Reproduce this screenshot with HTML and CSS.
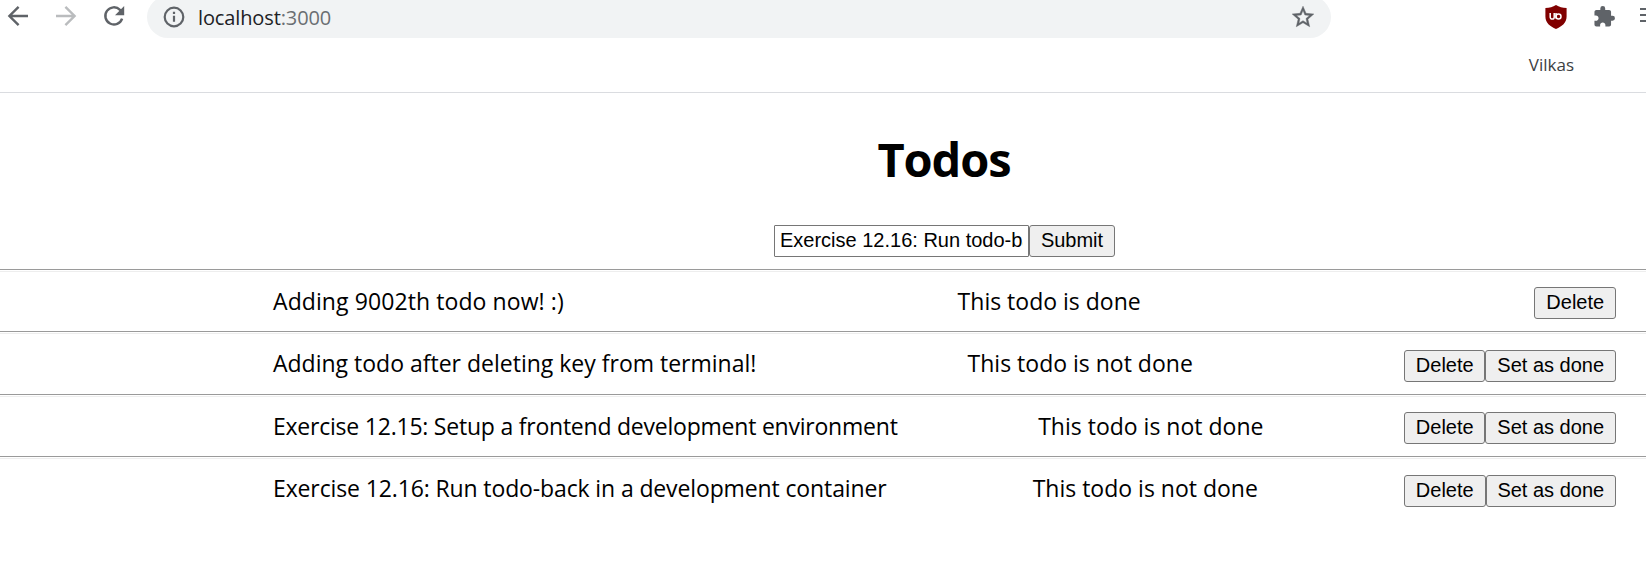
FILE: index.html
```
<!DOCTYPE html>
<html lang="en">
<head>
<meta charset="utf-8">
<title>Todos</title>
<link rel="stylesheet" href="styles.css">
</head>
<body>
<header class="browser">
  <div class="toolbar">
    <svg class="icon back" viewBox="0 0 24 24" fill="none" stroke="#5f6368" stroke-width="2.4"><path d="M22 12H3.5M12.6 2.8 3.4 12l9.2 9.2"/></svg>
    <svg class="icon forward" viewBox="0 0 24 24" fill="none" stroke="#babcbe" stroke-width="2.4"><path d="M2 12h18.5M11.4 2.8l9.2 9.2-9.2 9.2"/></svg>
    <svg class="icon reload" viewBox="0 0 24 24"><path fill="none" stroke="#5f6368" stroke-width="2.4" d="M20.1 14.6A8.6 8.6 0 1 1 18 5.800l1.600 1.600"/><path fill="#5f6368" d="M22.200 2v9.200H13z"/></svg>
    <div class="omnibox">
      <svg class="info" viewBox="0 0 22 22"><circle cx="11" cy="11" r="9.300" fill="none" stroke="#5f6368" stroke-width="2.200"/><path fill="#5f6368" d="M9.900 5.800h2.200V8H9.900zM9.900 9.700h2.200v6.100H9.900z"/></svg>
      <span class="url">localhost<span class="port">:3000</span></span>
      <svg class="star" viewBox="0 0 24 24"><path fill="#5f6368" stroke="#5f6368" stroke-width=".4" d="M22 9.240l-7.190-.62L12 2 9.190 8.630 2 9.240l5.460 4.730L5.820 21 12 17.270 18.180 21l-1.630-7.030L22 9.240zM12 15.400l-3.760 2.270 1-4.280-3.320-2.880 4.380-.38L12 6.100l1.710 4.040 4.380.38-3.320 2.880 1 4.280L12 15.400z"/></svg>
    </div>
    <svg class="shield" viewBox="0 0 22 24"><path fill="#800000" d="M11 0c3.200 2 6.400 3 10.600 3v8.500C21.600 18 17 21.300 11 24 5 21.300.4 18 .4 11.500V3C4.600 3 7.800 2 11 0z"/><path fill="none" stroke="#fff" stroke-width="1.500" d="M5.200 8v4a2 2 0 0 0 4 .2V8M11 8v5.400"/><circle cx="13.500" cy="11.500" r="2.500" fill="none" stroke="#fff" stroke-width="1.500"/></svg>
    <svg class="puzzle" viewBox="1.800 1 22 21.500"><path fill="#5f6368" d="M20.500 11H19V7c0-1.100-.9-2-2-2h-4V3.500a2.500 2.500 0 0 0-5 0V5H4c-1.100 0-1.990.9-1.990 2v3.800H3.500c1.490 0 2.700 1.210 2.700 2.700s-1.210 2.700-2.700 2.700H2V20c0 1.100.9 2 2 2h3.800v-1.500c0-1.490 1.210-2.700 2.700-2.700 1.490 0 2.700 1.210 2.700 2.700V22H17c1.100 0 2-.9 2-2v-4h1.500a2.500 2.500 0 0 0 0-5z"/></svg>
    <svg class="list" viewBox="0 0 6 16"><path fill="none" stroke="#5f6368" stroke-width="2" d="M0 2h6M0 8h6M0 14h6"/></svg>
  </div>
  <div class="bookmarks"><span class="bookmark">Vilkas</span></div>
</header>
<main class="app">
  <h1 class="title">Todos</h1>
  <form class="new-todo">
    <input class="field" type="text" value="Exercise 12.16: Run todo-back in a development container">
    <button class="button submit" type="button">Submit</button>
  </form>
  <hr class="rule">
  <div class="todo"><span class="text t1">Adding 9002th todo now! :)</span><span class="text">This todo is done</span><span class="actions"><button class="button delete">Delete</button></span></div>
  <hr class="rule">
  <div class="todo"><span class="text">Adding todo after deleting key from terminal!</span><span class="text">This todo is not done</span><span class="actions"><button class="button delete">Delete</button><button class="button done">Set as done</button></span></div>
  <hr class="rule">
  <div class="todo"><span class="text t3">Exercise 12.15: Setup a frontend development environment</span><span class="text">This todo is not done</span><span class="actions"><button class="button delete">Delete</button><button class="button done">Set as done</button></span></div>
  <hr class="rule">
  <div class="todo"><span class="text t4">Exercise 12.16: Run todo-back in a development container</span><span class="text">This todo is not done</span><span class="actions"><button class="button delete">Delete</button><button class="button done">Set as done</button></span></div>
</main>
</body>
</html>
```
FILE: styles.css
```
* { box-sizing: border-box; }
html, body { margin: 0; height: 100%; overflow: hidden; background: #fff; }
body { font-family: "Open Sans", "Noto Sans", sans-serif; color: #000; }
.browser { height: 93px; border-bottom: 1px solid #dadce0; overflow: hidden; }
.toolbar { display: flex; align-items: center; height: 42px; margin-top: -4px; width: 1646px; }
.toolbar svg { flex: none; display: block; }
.icon { width: 24px; height: 24px; margin-top: -2px; }
.back { margin-left: 6px; }
.forward { margin-left: 24px; }
.reload { margin-left: 24px; }
.omnibox { flex: none; display: flex; align-items: center; width: 1184px; height: 42px; margin-left: 21px; padding: 0 15px 0 16px; border-radius: 21px; background: #f1f3f4; }
.info { width: 22px; height: 22px; }
.url { flex: 1; margin-left: 13px; padding-top: 1px; font-size: 20px; line-height: 28px; letter-spacing: -0.12px; color: #202124; }
.port { color: #6a6e72; }
.star { width: 26px; height: 26px; }
.shield { width: 22px; height: 24px; margin-left: 214px; margin-top: -1px; }
.puzzle { width: 22px; height: 21px; margin-left: 27px; margin-top: -1px; }
.list { width: 6px; height: 16px; margin-left: 24px; margin-top: -4px; }
.bookmarks { display: flex; justify-content: flex-end; padding: 13px 72px 0 0; }
.bookmark { font-size: 17px; line-height: 28px; color: #3c4043; }
.app { width: 1646px; }
.title { margin: 0; padding: 31px 0 0 242px; height: 132px; text-align: center; font-size: 47px; line-height: 70px; letter-spacing: -1.1px; font-weight: 700; }
.new-todo { display: flex; height: 43.9px; margin: 0; padding-left: 774px; }
.field { width: 255px; height: 32px; margin: 0; padding: 0 5px 2px; border: 1px solid #767676; border-radius: 1px; background: #fff; font: 20px "Liberation Sans", Arial, sans-serif; color: #000; outline: none; }
.button { height: 32px; margin: 0; padding: 0 0 1px; border: 1px solid #767676; border-radius: 3px; background: #efefef; font: 20px "Liberation Sans", Arial, sans-serif; color: #000; white-space: nowrap; }
.submit { width: 86px; padding-bottom: 2px; }
.delete { width: 81.5px; }
.done { width: 130.5px; }
.rule { height: 3px; margin: 0; border: solid; border-width: 1px 0; border-color: #9a9a9a transparent #eee; }
.todo { display: flex; justify-content: space-between; height: 59.5px; padding: 15.2px 30px 0 273px; font-size: 23px; line-height: 32px; white-space: nowrap; }
.text { margin-top: -2.2px; }
.t1 { letter-spacing: 0.09px; }
.t3 { letter-spacing: -0.225px; }
.t4 { letter-spacing: -0.125px; }
.actions { display: flex; }
```
